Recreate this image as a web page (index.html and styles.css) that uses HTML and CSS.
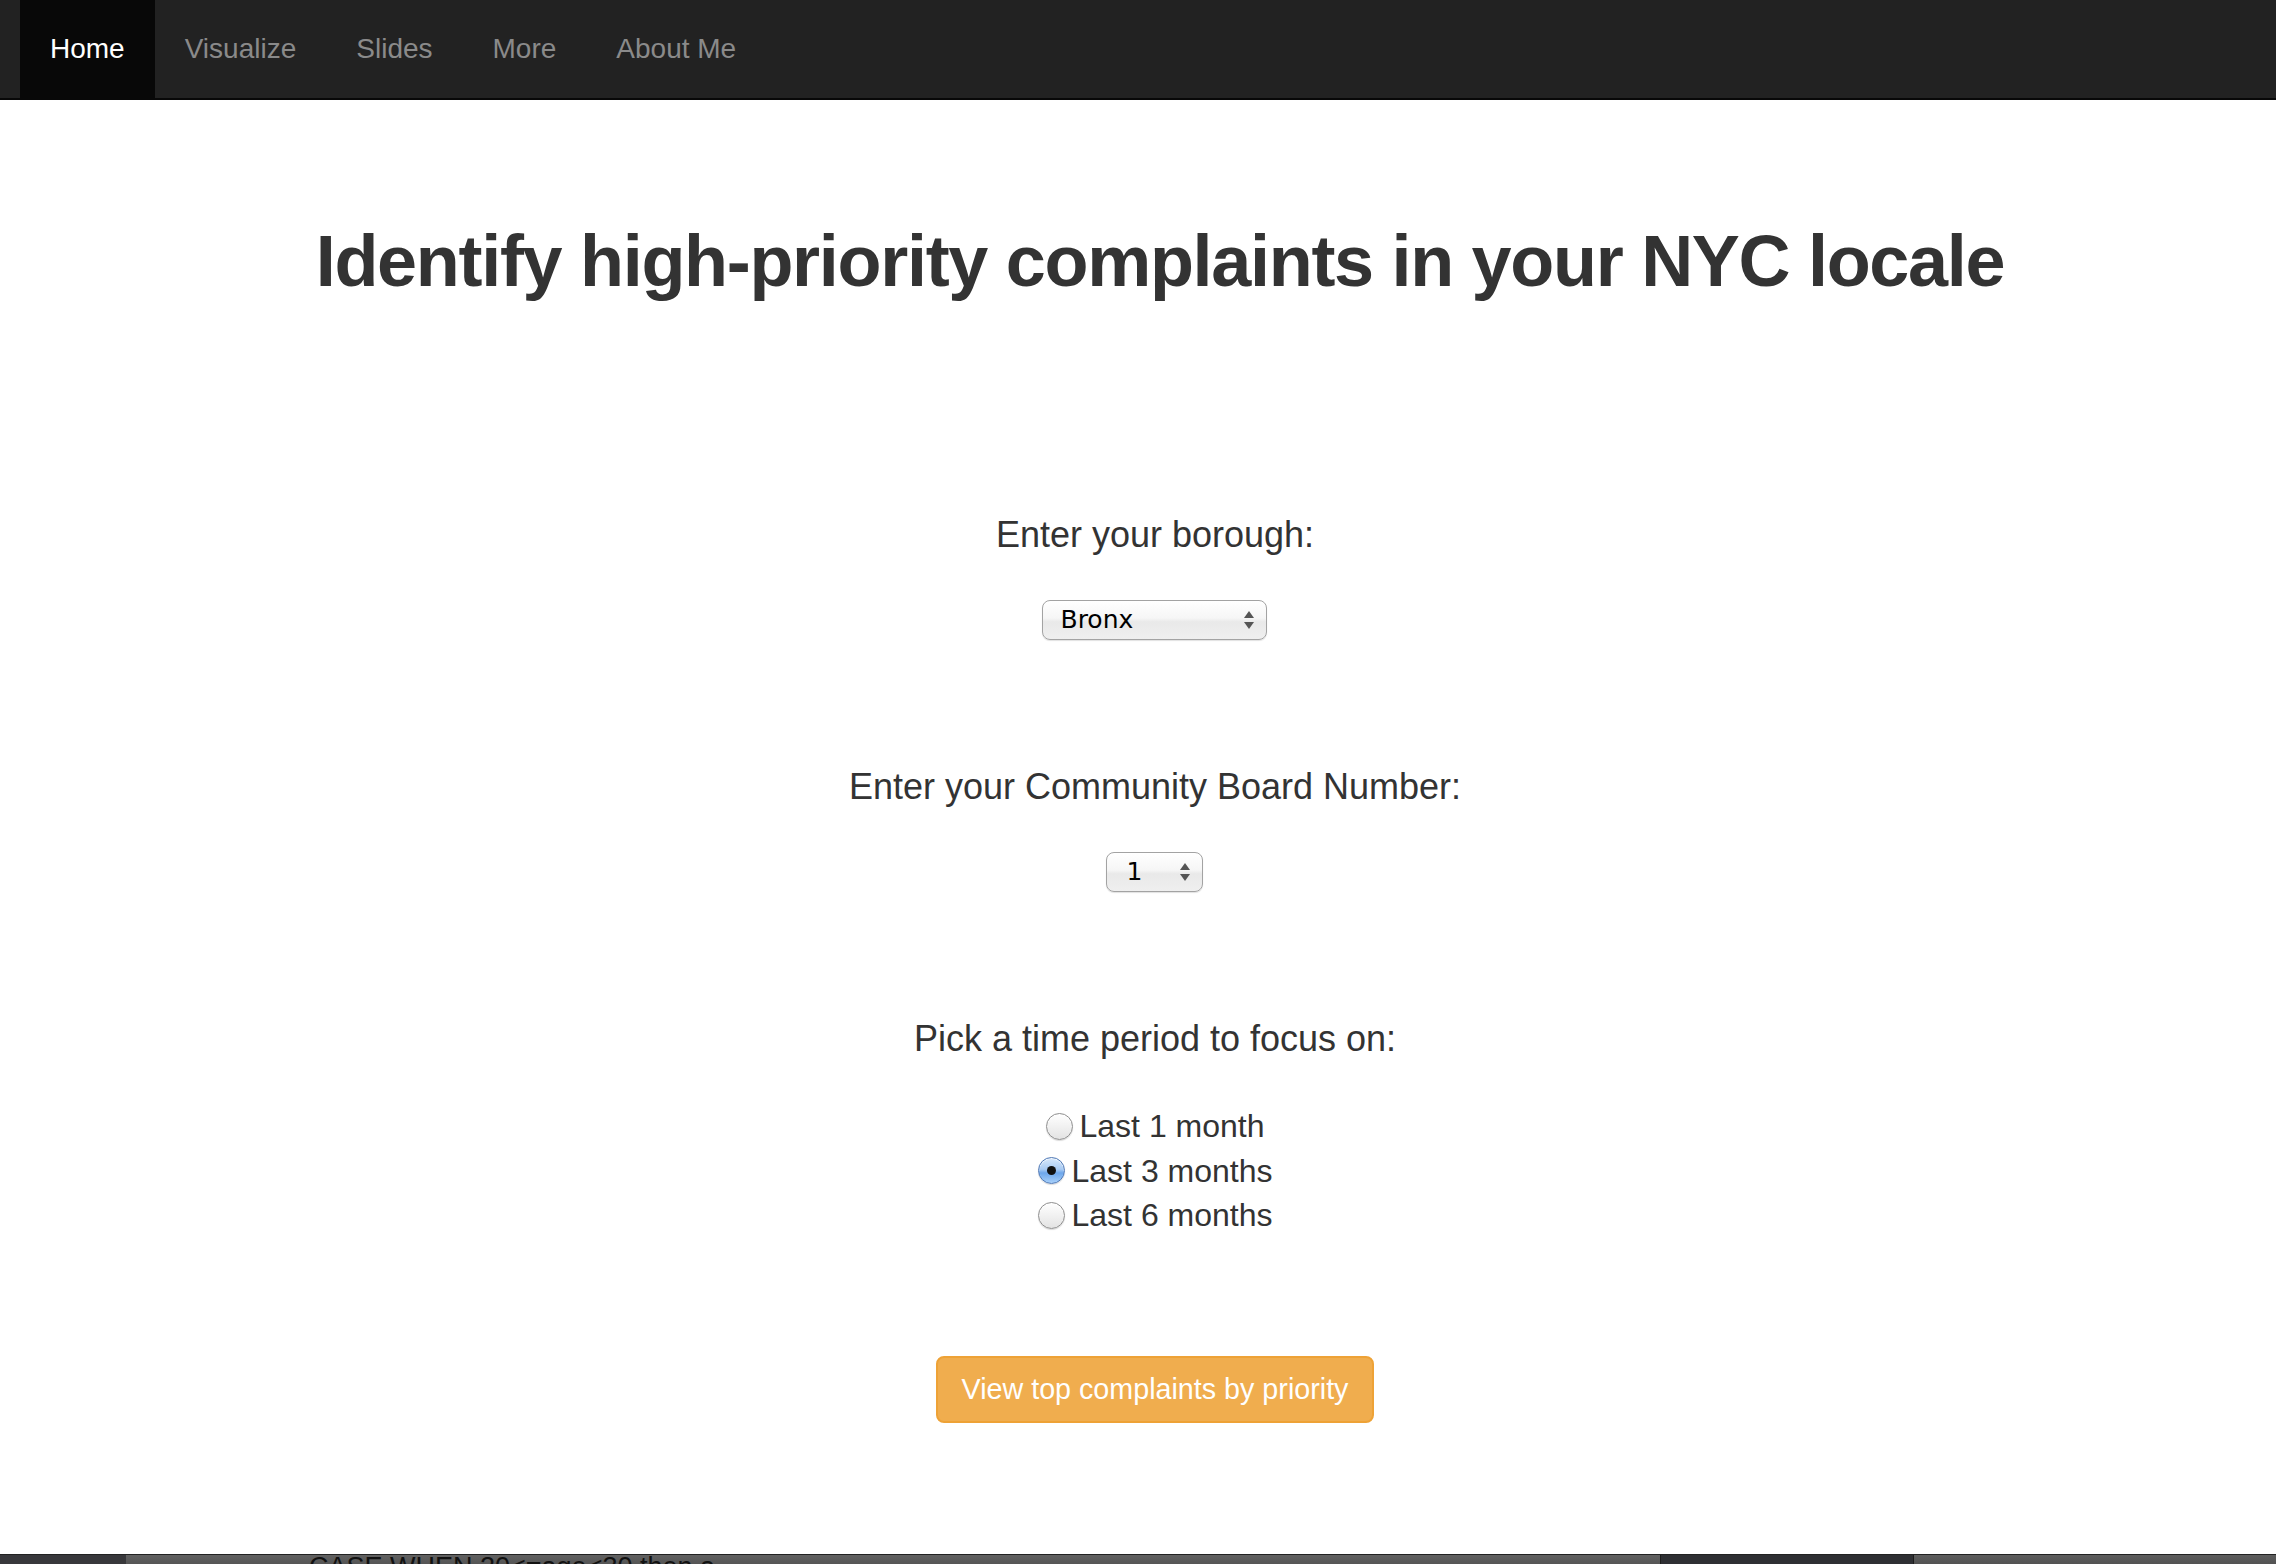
FILE: index.html
```html
<!DOCTYPE html>
<html lang="en">
<head>
<meta charset="utf-8">
<title>NYC Complaints</title>
<link rel="stylesheet" href="styles.css">
</head>
<body>
<nav class="navbar">
  <ul class="nav">
    <li class="active"><a href="#">Home</a></li>
    <li><a href="#">Visualize</a></li>
    <li><a href="#">Slides</a></li>
    <li><a href="#">More</a></li>
    <li><a href="#">About Me</a></li>
  </ul>
</nav>

<main class="main">
  <h1 class="title">Identify high-priority complaints in your NYC locale</h1>

  <form class="form">
    <div class="group">
      <h4 class="label">Enter your borough:</h4>
      <div class="select select-wide">
        <span class="select-value">Bronx</span>
        <svg class="arrows" width="12" height="18" viewBox="0 0 12 18"><path d="M6 0 L11 7 L1 7 Z" fill="#555"/><path d="M6 18 L11 11 L1 11 Z" fill="#555"/></svg>
      </div>
    </div>

    <div class="group">
      <h4 class="label">Enter your Community Board Number:</h4>
      <div class="select select-narrow">
        <span class="select-value">1</span>
        <svg class="arrows" width="12" height="18" viewBox="0 0 12 18"><path d="M6 0 L11 7 L1 7 Z" fill="#555"/><path d="M6 18 L11 11 L1 11 Z" fill="#555"/></svg>
      </div>
    </div>

    <div class="group">
      <h4 class="label">Pick a time period to focus on:</h4>
      <div class="radios">
        <label class="radio"><span class="dot"></span>Last 1 month</label>
        <label class="radio"><span class="dot checked"></span>Last 3 months</label>
        <label class="radio"><span class="dot"></span>Last 6 months</label>
      </div>
    </div>

    <button type="button" class="btn">View top complaints by priority</button>
  </form>
</main>

<div class="dock">
  <div class="seg seg-a"></div>
  <div class="seg seg-b"><span class="dock-text">CASE WHEN 20&lt;=age&lt;30 then a</span></div>
  <div class="seg seg-c"></div>
  <div class="seg seg-d"></div>
</div>
</body>
</html>
```

FILE: styles.css
```css
html, body {
  margin: 0;
  padding: 0;
  background: #fff;
}

body {
  font-family: "Liberation Sans", Arial, Helvetica, sans-serif;
  color: #333;
  height: 1564px;
  overflow: hidden;
}

/* Navbar */
.navbar {
  background: #222;
  border-bottom: 2px solid #080808;
  height: 98px;
  padding-left: 20px;
  display: flex;
}

.nav {
  list-style: none;
  margin: 0;
  padding: 0;
  display: flex;
}

.nav a {
  display: block;
  padding: 0 30px;
  line-height: 98px;
  font-size: 28px;
  color: #8a8a8a;
  text-decoration: none;
}

.nav .active a {
  background: #080808;
  color: #fff;
}

/* Main */
.main {
  padding-left: 34px;
  text-align: center;
}

.title {
  margin: 119px 0 0;
  padding-left: 10px;
  font-size: 72px;
  line-height: 84px;
  font-weight: bold;
  letter-spacing: -1.3px;
  color: #333;
}

.form {
  margin-top: 212px;
  display: flex;
  flex-direction: column;
  align-items: center;
}

.group {
  display: flex;
  flex-direction: column;
  align-items: center;
}

.group + .group {
  margin-top: 127px;
}

.label {
  margin: 0 0 45px;
  font-size: 36px;
  line-height: 40px;
  font-weight: normal;
  color: #333;
}

/* Select */
.select {
  box-sizing: border-box;
  height: 40px;
  display: flex;
  align-items: center;
  justify-content: space-between;
  border: 1px solid #a3a3a3;
  border-radius: 8px;
  background: linear-gradient(#ffffff 0%, #f6f6f6 45%, #e9e9e9 55%, #efefef 100%);
  box-shadow: 0 1px 1px rgba(0, 0, 0, 0.12);
  font-family: "DejaVu Sans", "Lucida Grande", sans-serif;
  font-size: 25px;
  color: #000;
}

.select-wide {
  width: 225px;
  padding: 0 11px 0 17px;
}

.select-narrow {
  width: 97px;
  padding: 0 11px 0 19px;
}

.select-value {
  line-height: 38px;
}

.arrows {
  display: block;
}

/* Radios */
.radios {
  display: flex;
  flex-direction: column;
  align-items: center;
}

.radio {
  display: flex;
  align-items: center;
  font-size: 32px;
  line-height: 44.5px;
  color: #333;
}

.dot {
  box-sizing: border-box;
  width: 27px;
  height: 27px;
  margin-right: 7px;
  border-radius: 50%;
  border: 1px solid #8e8e8e;
  background: linear-gradient(#ffffff, #e3e3e3);
  box-shadow: inset 0 1px 1px rgba(255, 255, 255, 0.8), 0 1px 1px rgba(0, 0, 0, 0.15);
  display: flex;
  align-items: center;
  justify-content: center;
}

.dot.checked {
  border-color: #4f78b5;
  background: linear-gradient(#d7e8fb 0%, #a9cbf3 45%, #6da7ec 60%, #a8d0fa 100%);
}

.dot.checked::after {
  content: "";
  width: 9px;
  height: 9px;
  border-radius: 50%;
  background: #111;
}

/* Button */
.btn {
  margin-top: 118px;
  padding: 12px 24px;
  font-family: "Liberation Sans", Arial, Helvetica, sans-serif;
  font-size: 28.7px;
  line-height: 39px;
  color: #fff;
  background: #f0ad4e;
  border: 2px solid #eea236;
  border-radius: 8px;
  cursor: pointer;
}

/* Bottom strip (another window peeking in) */
.dock {
  position: fixed;
  left: 0;
  right: 0;
  bottom: 0;
  height: 9px;
  display: flex;
  overflow: hidden;
  border-top: 1px solid #222;
}

.seg {
  height: 100%;
  overflow: hidden;
}

.seg-a {
  width: 126px;
  background: #38383b;
}

.seg-b {
  flex: 1;
  background: linear-gradient(#616161, #555);
  padding-left: 183px;
}

.seg-c {
  width: 252px;
  background: #2e2f33;
  border-left: 1px solid #1c1c1c;
  border-right: 1px solid #1c1c1c;
}

.seg-d {
  width: 362px;
  background: linear-gradient(#5d5d5d, #525252);
}

.dock-text {
  display: block;
  font-size: 27px;
  line-height: 24px;
  color: #111;
  white-space: nowrap;
}
```
